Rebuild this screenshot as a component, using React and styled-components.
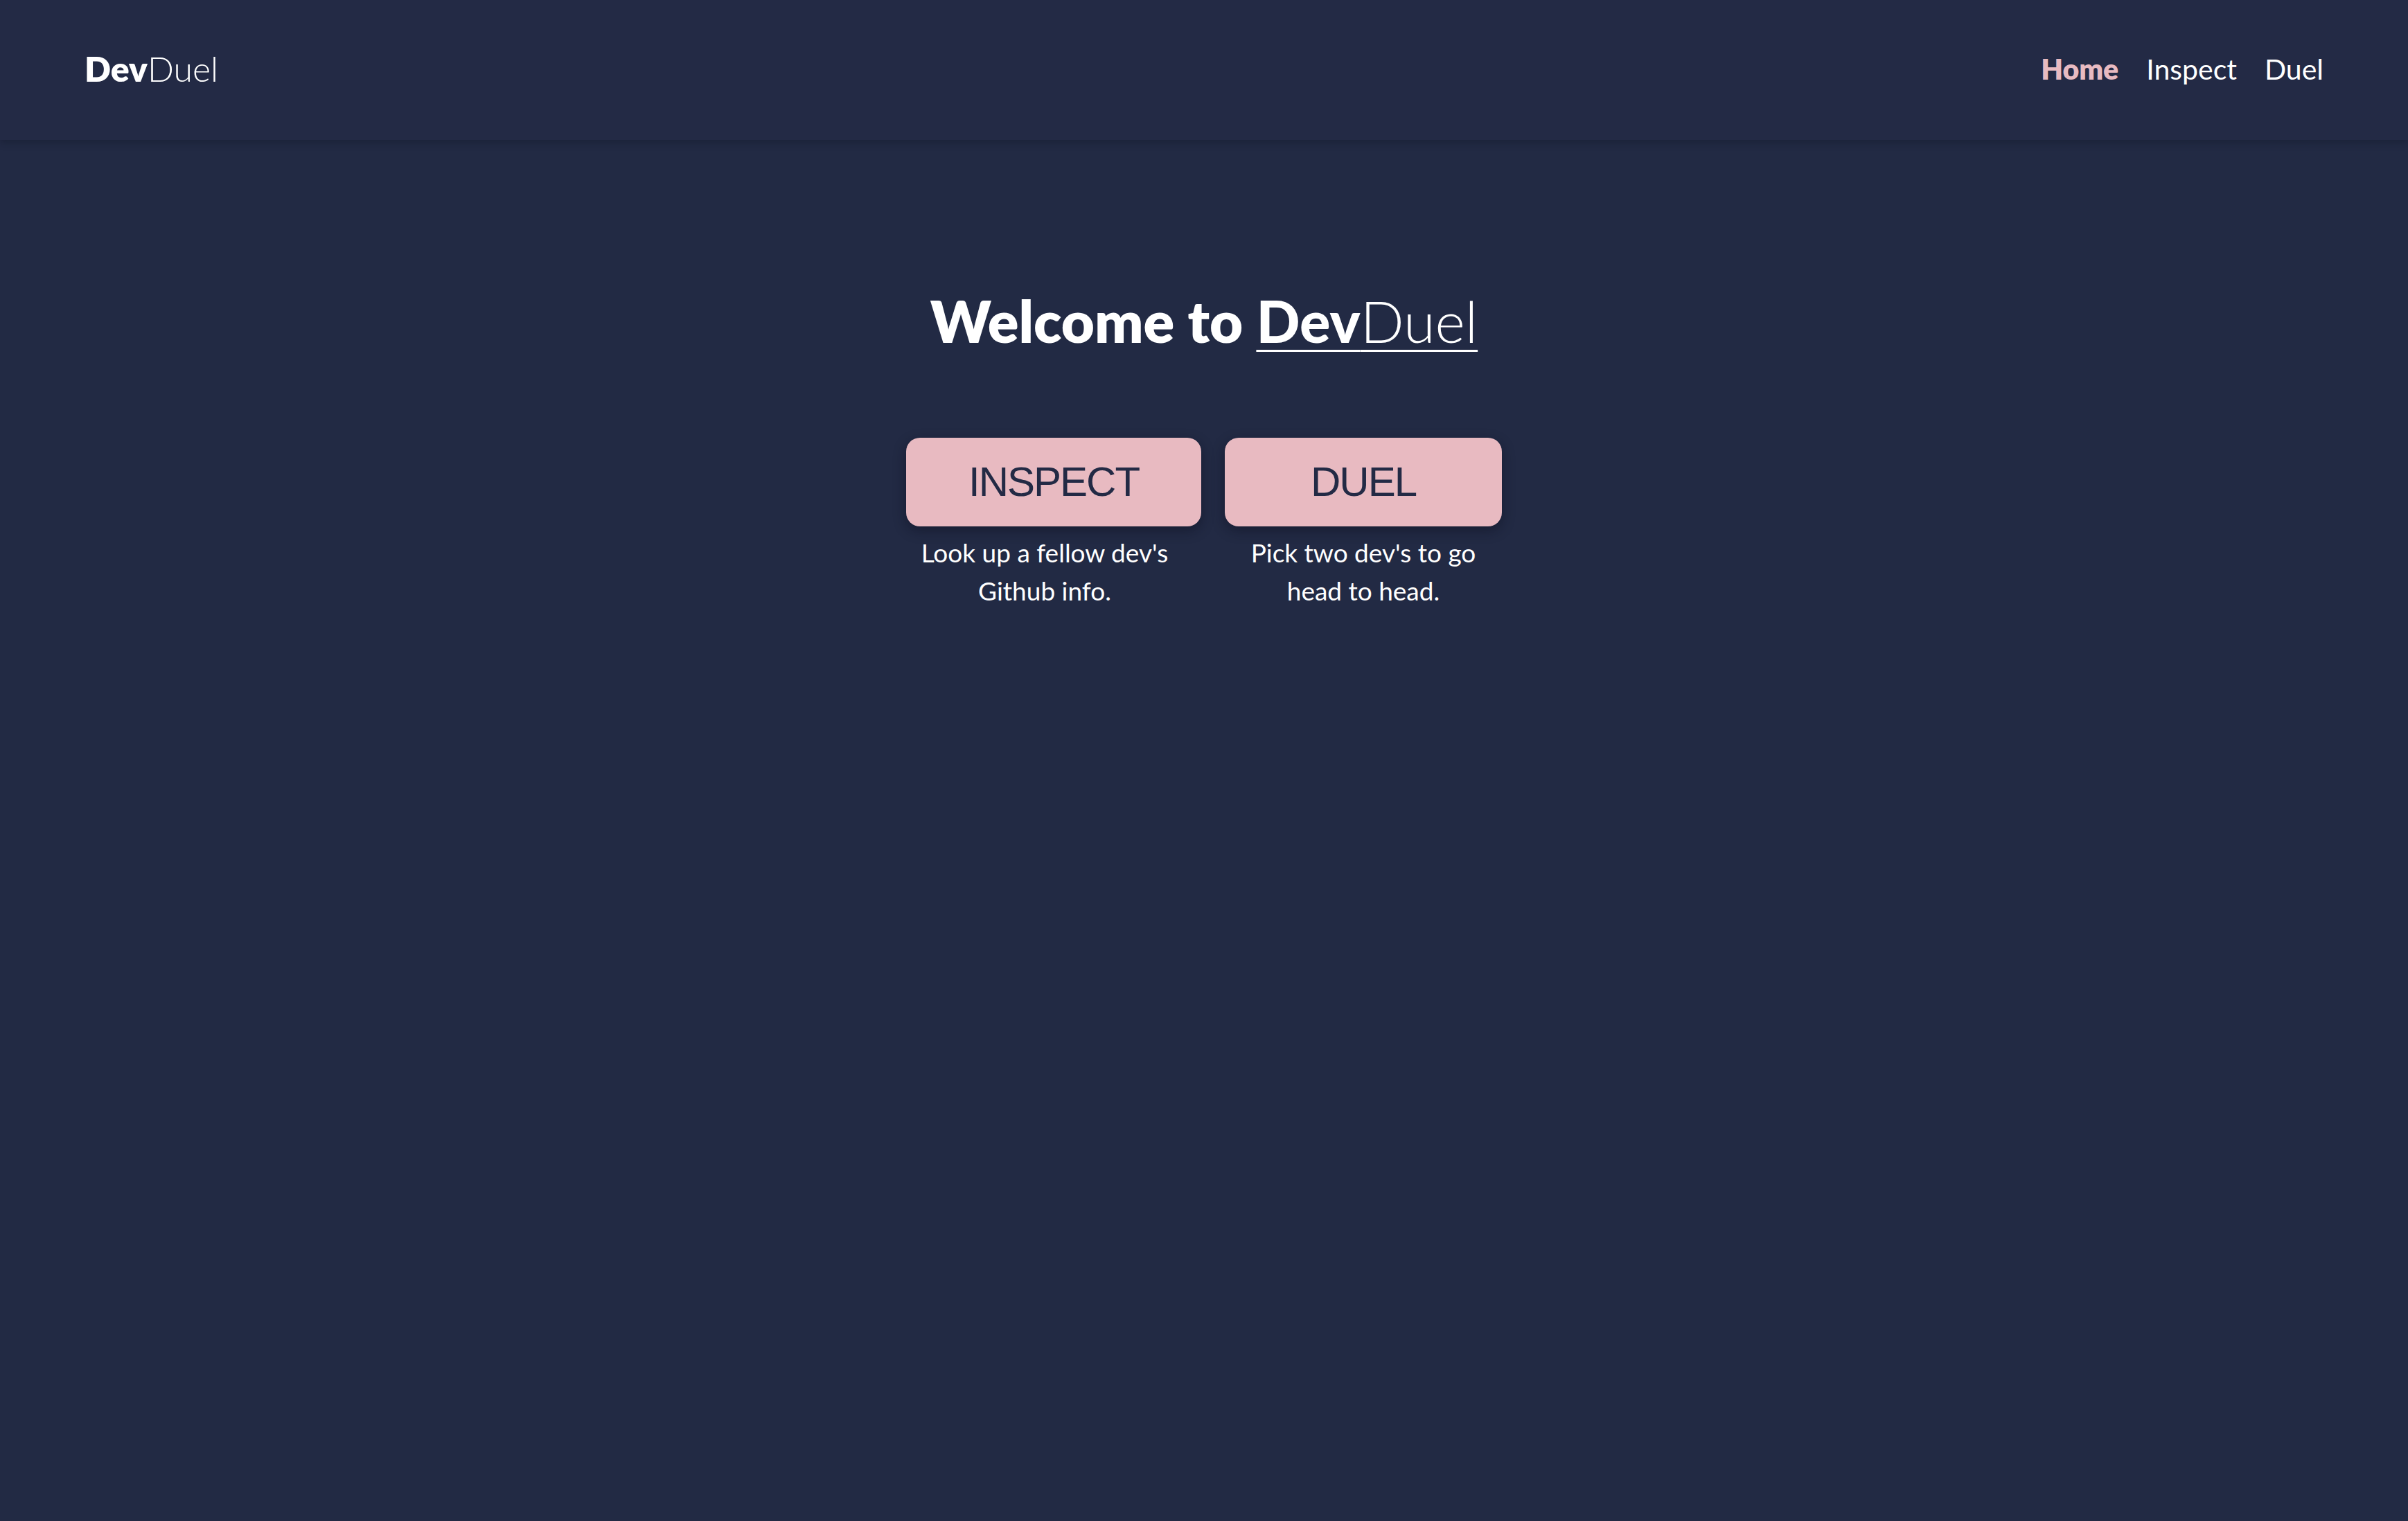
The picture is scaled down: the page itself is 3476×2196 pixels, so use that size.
import React from "react";
import styled, { createGlobalStyle } from "styled-components";

const GlobalStyle = createGlobalStyle`
    html, body {
        margin: 0;
        padding: 0;
        background: #222a44;
        min-height: 100%;
    }
    body {
        font-family: "Lato", "Noto Sans", sans-serif;
        color: #ffffff;
    }
`;

function App() {
    return (
        <>
            <GlobalStyle />
            <Page>
                <Header>
                    <Logo>
                        <strong>Dev</strong>
                        <span>Duel</span>
                    </Logo>
                    <Nav>
                        <NavLink $active>Home</NavLink>
                        <NavLink>Inspect</NavLink>
                        <NavLink>Duel</NavLink>
                    </Nav>
                </Header>
                <Main>
                    <Title>
                        Welcome to{" "}
                        <TitleBrand>
                            <strong>Dev</strong>
                            <span>Duel</span>
                        </TitleBrand>
                    </Title>
                    <Choices>
                        <Choice>
                            <ChoiceButton>INSPECT</ChoiceButton>
                            <ChoiceText>Look up a fellow dev's Github info.</ChoiceText>
                        </Choice>
                        <Choice>
                            <ChoiceButton>DUEL</ChoiceButton>
                            <ChoiceText>Pick two dev's to go head to head.</ChoiceText>
                        </Choice>
                    </Choices>
                </Main>
            </Page>
        </>
    );
}

export default App;

const Page = styled.div`
    min-height: 100vh;
    background: #222a44;
`;
const Header = styled.header`
    height: 202px;
    padding: 0 122px 4px;
    box-sizing: border-box;
    display: flex;
    align-items: center;
    justify-content: space-between;
    background: #232a45;
    box-shadow: 0 4px 10px rgba(15, 19, 34, 0.35);
    position: relative;
`;
const Logo = styled.div`
    font-size: 50px;
    color: #ffffff;
    strong {
        font-weight: 800;
    }
    span {
        font-weight: 300;
    }
`;
const Nav = styled.nav`
    display: flex;
    gap: 40px;
`;
const NavLink = styled.a`
    font-size: 41px;
    cursor: pointer;
    color: ${(p) => (p.$active ? "#e8bac1" : "#ffffff")};
    font-weight: ${(p) => (p.$active ? 800 : 400)};
`;
const Main = styled.main`
    display: flex;
    flex-direction: column;
    align-items: center;
    padding-top: 212px;
`;
const Title = styled.h1`
    margin: 0;
    font-size: 83px;
    font-weight: 800;
    line-height: 1.2;
`;
const TitleBrand = styled.span`
    text-decoration: underline;
    text-decoration-thickness: 3px;
    text-underline-offset: 10px;
    span {
        font-weight: 300;
    }
`;
const Choices = styled.div`
    display: flex;
    gap: 60px;
    margin-top: 118px;
`;
const Choice = styled.div`
    width: 400px;
    display: flex;
    flex-direction: column;
    align-items: flex-start;
`;
const ChoiceButton = styled.button`
    min-width: 100%;
    height: 128px;
    padding: 0 90px;
    border: none;
    border-radius: 20px;
    background: #e8bac1;
    color: #232a45;
    font-family: "Liberation Sans", Arial, sans-serif;
    font-size: 60px;
    letter-spacing: -2px;
    white-space: nowrap;
    box-shadow: 0 6px 18px rgba(10, 14, 28, 0.45);
    cursor: pointer;
`;
const ChoiceText = styled.p`
    width: 400px;
    margin: 10px 0 0;
    text-align: center;
    font-size: 37px;
    line-height: 55px;
    color: #ffffff;
`;
